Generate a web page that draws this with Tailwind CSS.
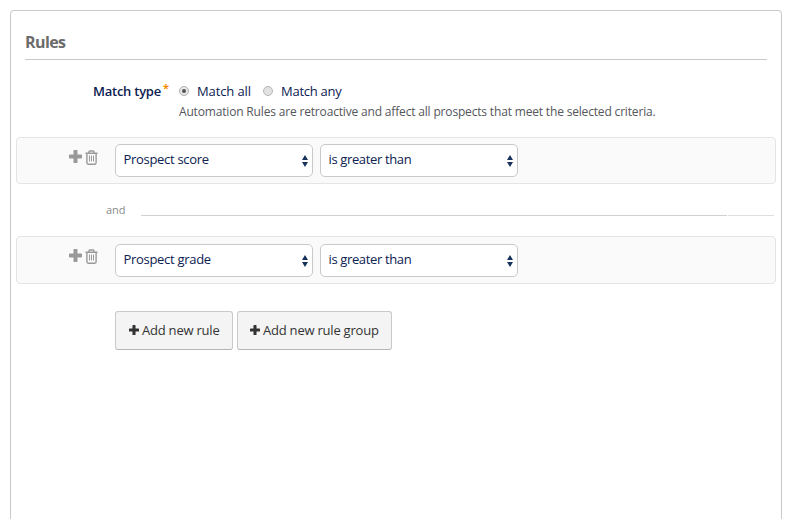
<!DOCTYPE html>
<html lang="en">
<head>
<meta charset="utf-8">
<title>Rules</title>
<script src="https://cdn.jsdelivr.net/npm/@tailwindcss/browser@4"></script>
</head>
<body class="h-[519px] overflow-hidden bg-white pt-[10px] pl-[10px] font-['Open_Sans','Noto_Sans',sans-serif] text-[13px] text-[#0b2152]">
<svg class="hidden">
  <symbol id="plus" viewBox="0 0 13 13"><path d="M4.500 .8Q4.500 0 5.300 0h2.400Q8.500 0 8.500 .8V4.500h3.700q.8 0 .8.8v2.400q0 .8-.8.8H8.500v3.700q0 .8-.8.8H5.300q-.8 0-.8-.8V8.500H.8Q0 8.500 0 7.700V5.300Q0 4.500 .8 4.500h3.700z" fill="currentColor"/></symbol>
  <symbol id="trash" viewBox="0 0 13 15"><path d="M.5 3.200h12M4 3V1.800Q4 1 4.800 1h3.400Q9 1 9 1.800V3M1.900 3.500v9.300q0 1.400 1.400 1.400h6.400q1.400 0 1.400-1.400V3.500" fill="none" stroke="currentColor" stroke-width="1.400"/><path d="M4.500 5.500v6M6.500 5.500v6M8.500 5.500v6" fill="none" stroke="currentColor" stroke-width="1"/></symbol>
  <symbol id="sort" viewBox="0 0 6 12"><path d="M3 0 6 5H0zM3 12 0 7h6z" fill="#16325c"/></symbol>
</svg>
<main class="h-[509px] w-[772px] rounded-t-[4px] border border-b-0 border-[#c9c9c9] px-[5px]">
  <h1 class="mx-[9px] h-[49px] border-b border-[#c9c9c9] pt-[19px] text-[16px] leading-[24px] font-bold tracking-[-0.6px] text-[#6b6b6b]">Rules</h1>
  <div class="flex h-[77px] pt-[21px]">
    <div class="relative w-[163px] pl-[77px] leading-[20px] font-semibold tracking-[-0.25px]">Match type<span class="absolute top-[-3px] left-[147px] text-[11px] font-bold text-[#f68b00]">*</span></div>
    <div>
      <div class="flex h-[20px] items-center leading-[20px]">
        <span class="mr-[8px] flex size-[10px] items-center justify-center rounded-full border border-[#b0b0b0] bg-[#e6e6e6]"><span class="size-[4px] rounded-full bg-[#555]"></span></span>
        <span class="w-[66px] tracking-[-0.12px] whitespace-nowrap">Match all</span>
        <span class="mr-[8px] size-[10px] rounded-full border border-[#b5b5b5] bg-[#e2e2e2]"></span>
        <span class="tracking-[-0.27px]">Match any</span>
      </div>
      <p class="pt-px text-[12px] leading-[20px] tracking-[-0.17px] whitespace-nowrap text-[#54565b]">Automation Rules are retroactive and affect all prospects that meet the selected criteria.</p>
    </div>
  </div>
  <section class="flex h-[47px] rounded-[4px] border border-[#e5e5e5] bg-[#fafafa] pt-[6px] pl-[51.500px] text-[#999]">
    <svg class="mt-[6px] size-[13px]"><use href="#plus"/></svg>
    <svg class="mt-[6px] ml-[3px] h-[15px] w-[13px]"><use href="#trash"/></svg>
    <div class="ml-[17.500px] flex h-[33px] w-[198px] items-center justify-between rounded-[5px] border border-[#c9c9c9] bg-white pr-[4px] pb-[2px] pl-[7.500px] text-[#0b2152]"><span class="tracking-[-0.3px]">Prospect score</span><svg class="mt-[2px] h-[12px] w-[6px]"><use href="#sort"/></svg></div>
    <div class="ml-[7px] flex h-[33px] w-[198px] items-center justify-between rounded-[5px] border border-[#c9c9c9] bg-white pr-[4px] pb-[2px] pl-[7.500px] text-[#0b2152]"><span class="tracking-[-0.36px]">is greater than</span><svg class="mt-[2px] h-[12px] w-[6px]"><use href="#sort"/></svg></div>
  </section>
  <div class="flex h-[52px] pl-[90px] text-[11px] text-[#8a8a8a]">
    <span class="w-[35px] pt-[17px] leading-[18px]">and</span>
    <span class="mt-[31px] h-px w-[586px] bg-[#d0d0d0]"></span>
    <span class="mt-[31px] ml-px h-px w-[46px] bg-[#dedede]"></span>
  </div>
  <section class="flex h-[48px] rounded-[4px] border border-[#e5e5e5] bg-[#fafafa] pt-[7px] pl-[51.500px] text-[#999]">
    <svg class="mt-[5px] size-[13px]"><use href="#plus"/></svg>
    <svg class="mt-[5px] ml-[3px] h-[15px] w-[13px]"><use href="#trash"/></svg>
    <div class="ml-[17.500px] flex h-[33px] w-[198px] items-center justify-between rounded-[5px] border border-[#c9c9c9] bg-white pr-[4px] pb-[2px] pl-[7.500px] text-[#0b2152]"><span class="tracking-[-0.3px]">Prospect grade</span><svg class="mt-[2px] h-[12px] w-[6px]"><use href="#sort"/></svg></div>
    <div class="ml-[7px] flex h-[33px] w-[198px] items-center justify-between rounded-[5px] border border-[#c9c9c9] bg-white pr-[4px] pb-[2px] pl-[7.500px] text-[#0b2152]"><span class="tracking-[-0.36px]">is greater than</span><svg class="mt-[2px] h-[12px] w-[6px]"><use href="#sort"/></svg></div>
  </section>
  <div class="mt-[27px] ml-[99px] flex gap-[4px] text-[#333]">
    <button class="flex h-[39px] w-[118px] items-center rounded-[3px] border border-[#c9c9c9] border-b-[#b5b5b5] bg-[#f4f4f4] pl-[13px] tracking-[-0.22px] whitespace-nowrap"><svg class="mr-[3px] mb-px size-[10px]"><use href="#plus"/></svg><span>Add new rule</span></button>
    <button class="flex h-[39px] w-[155px] items-center rounded-[3px] border border-[#c9c9c9] border-b-[#b5b5b5] bg-[#f4f4f4] pl-[12px] tracking-[-0.22px] whitespace-nowrap"><svg class="mr-[3px] mb-px size-[10px]"><use href="#plus"/></svg><span>Add new rule group</span></button>
  </div>
</main>
</body>
</html>
